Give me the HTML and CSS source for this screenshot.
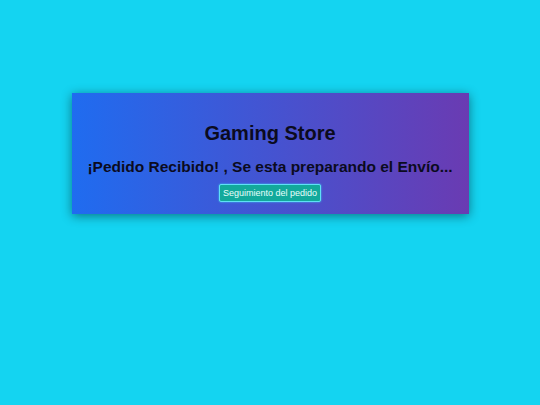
FILE: index.html
```html
<!DOCTYPE html>
<html lang="es">
<head>
<meta charset="utf-8">
<title>Gaming Store</title>
<link rel="stylesheet" href="styles.css">
</head>
<body>
<main class="page">
  <section class="card">
    <h1 class="title">Gaming Store</h1>
    <h2 class="subtitle">¡Pedido Recibido! , Se esta preparando el Envío...</h2>
    <button class="track-btn" type="button">Seguimiento del pedido</button>
  </section>
</main>
</body>
</html>
```
FILE: styles.css
```css
html, body {
  margin: 0;
  padding: 0;
}
body {
  background: #14d4f1;
  font-family: "Liberation Sans", Arial, sans-serif;
  width: 540px;
  height: 405px;
  overflow: hidden;
}
.page {
  display: flex;
  justify-content: center;
  padding-top: 93px;
}
.card {
  width: 397px;
  height: 121px;
  box-sizing: border-box;
  background: linear-gradient(to right, #1f6cf0, #6a3bb2);
  box-shadow: 0 2px 10px rgba(0, 0, 0, 0.45);
  display: flex;
  flex-direction: column;
  align-items: center;
  padding-top: 29px;
}
.title {
  margin: 0;
  font-size: 20px;
  font-weight: bold;
  color: #0b0b1e;
  line-height: 23px;
}
.subtitle {
  margin: 12px 0 0;
  font-size: 15.5px;
  font-weight: bold;
  color: #0b0b1e;
  line-height: 19px;
  white-space: nowrap;
}
.track-btn {
  margin-top: 8px;
  background: #12a99b;
  color: #e8fffb;
  border: 1px solid #5fe0f5;
  box-shadow: 0 0 2px #3fd0f5;
  border-radius: 2px;
  font-family: "Liberation Sans", Arial, sans-serif;
  font-size: 9px;
  padding: 3px 3px;
  height: 18px;
  line-height: 10px;
}
```
